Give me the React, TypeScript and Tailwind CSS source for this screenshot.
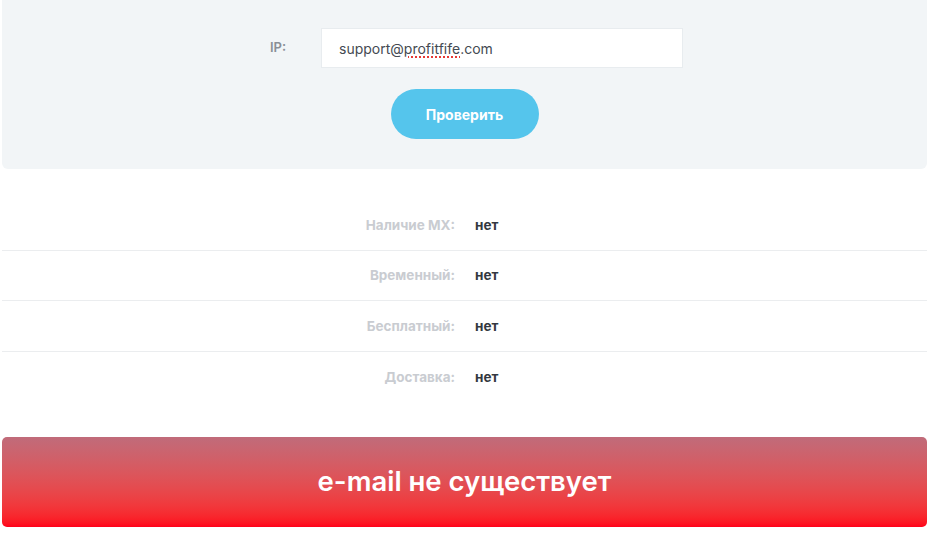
const rows = [
  { label: 'Наличие MX:', value: 'нет' },
  { label: 'Временный:', value: 'нет' },
  { label: 'Бесплатный:', value: 'нет' },
  { label: 'Доставка:', value: 'нет' },
];

export default function App() {
  return (
    <div className="w-[934px] h-[534px] bg-white px-[2px] font-['Inter','Open_Sans',sans-serif] overflow-hidden">
      <div className="w-[925px]">
        {/* check form */}
        <div className="h-[169px] bg-[#f2f5f7] rounded-b-[6px] flex flex-col items-center pt-[28px]">
          <div className="flex items-center pl-[24px]">
            <span className="w-[51px] text-[13px] font-semibold text-[#8a8f96]">IP:</span>
            <div className="w-[362px] h-[40px] bg-white border border-[#e8ecef] flex items-center pl-[17px] text-[14px] text-[#444a52]">
              support@
              <span className="underline decoration-dotted decoration-[#e53935] decoration-[1.5px] underline-offset-[3px]">profitfife</span>
              .com
            </div>
          </div>
          <button className="mt-[21px] w-[148px] h-[50px] rounded-full bg-[#55c5ec] text-white text-[14px] font-bold">
            Проверить
          </button>
        </div>

        {/* results */}
        <div className="mt-[31px]">
          {rows.map((r, i) => (
            <div
              key={r.label}
              className={`h-[50.5px] flex items-center ${i < rows.length - 1 ? 'border-b border-[#ebedef]' : ''}`}
            >
              <span className="w-[453px] text-right text-[13.5px] font-bold text-[#c9ccd1]">{r.label}</span>
              <span className="ml-[20px] text-[13.5px] font-bold text-[#333840]">{r.value}</span>
            </div>
          ))}
        </div>

        {/* status */}
        <div className="mt-[35px] h-[90px] rounded-[5px] bg-gradient-to-b from-[#c06b7a] to-[#ff0019] flex items-center justify-center">
          <span className="text-white text-[27.5px] font-semibold">e-mail не существует</span>
        </div>
      </div>
    </div>
  );
}
